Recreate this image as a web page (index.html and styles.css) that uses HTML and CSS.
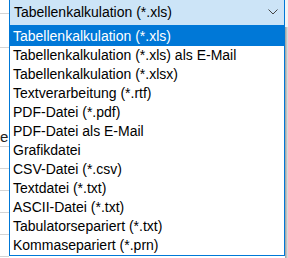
FILE: index.html
```html
<!DOCTYPE html>
<html lang="de">
<head>
  <meta charset="UTF-8" />
  <link rel="stylesheet" href="styles.css">
</head>
<body>
  <div class="sheet-edge">
    <div class="row r13"></div>
    <div class="row r34"></div>
    <div class="row r99"><span class="cell-text">e</span></div>
    <div class="row r22"></div>
    <div class="row r22"></div>
    <div class="row r22"></div>
    <div class="row r22"></div>
    <div class="row r22"></div>
  </div>

  <div class="picker">
    <div class="combo">
      <span class="combo-value">Tabellenkalkulation (*.xls)</span>
      <svg class="chevron" width="10" height="6" viewBox="0 0 10 6">
        <polyline points="0.5,0.5 5,5 9.5,0.5" fill="none" stroke="#444" stroke-width="1" />
      </svg>
    </div>
    <ul class="list">
      <li class="selected">Tabellenkalkulation (*.xls)</li>
      <li>Tabellenkalkulation (*.xls) als E-Mail</li>
      <li>Tabellenkalkulation (*.xlsx)</li>
      <li>Textverarbeitung (*.rtf)</li>
      <li>PDF-Datei (*.pdf)</li>
      <li>PDF-Datei als E-Mail</li>
      <li>Grafikdatei</li>
      <li>CSV-Datei (*.csv)</li>
      <li>Textdatei (*.txt)</li>
      <li>ASCII-Datei (*.txt)</li>
      <li>Tabulatorsepariert (*.txt)</li>
      <li>Kommasepariert (*.prn)</li>
    </ul>
  </div>

  <div class="shadow-edge">
    <div class="shadow-top"></div>
    <div class="shadow-side"></div>
  </div>
</body>
</html>
```

FILE: styles.css
```css
body {
  margin: 0;
  width: 288px;
  height: 258px;
  overflow: hidden;
  display: flex;
  background: #fff;
  font-family: "Liberation Sans", Arial, sans-serif;
  font-size: 14px;
  color: #000;
}

.sheet-edge {
  width: 9px;
  flex: none;
  background: #fff;
}

.row {
  box-sizing: border-box;
  border-bottom: 1px solid #d4d4d4;
  position: relative;
}

.r13 { height: 14px; }
.r34 { height: 34px; }
.r99 { height: 99px; }
.r22 { height: 22px; }

.cell-text {
  position: absolute;
  left: 0;
  bottom: 2px;
  font-size: 15px;
  line-height: 15px;
  color: #222;
}

.picker {
  width: 276px;
  flex: none;
  display: flex;
  flex-direction: column;
}

.combo {
  height: 26px;
  box-sizing: border-box;
  background: #cce4f7;
  border: 1px solid #0078d7;
  border-top: none;
  display: flex;
  align-items: center;
  padding: 0 0 1px 4px;
}

.combo-value {
  flex: 1;
}

.chevron {
  margin-right: 6px;
}

.list {
  list-style: none;
  margin: 0;
  padding: 0;
  height: 230px;
  box-sizing: border-box;
  border: 1px solid #0078d7;
  background: #fff;
}

.list li {
  height: 19px;
  line-height: 19px;
  padding-left: 3px;
  white-space: nowrap;
}

.list .selected {
  background: #0078d7;
  color: #fff;
}

.shadow-edge {
  width: 3px;
  flex: none;
  display: flex;
  flex-direction: column;
}

.shadow-top {
  height: 27px;
  background: #f4f4f4;
}

.shadow-side {
  flex: 1;
  background: linear-gradient(to right, #9c9c9c, #cfcfcf 70%, #e6e6e6);
}
```
